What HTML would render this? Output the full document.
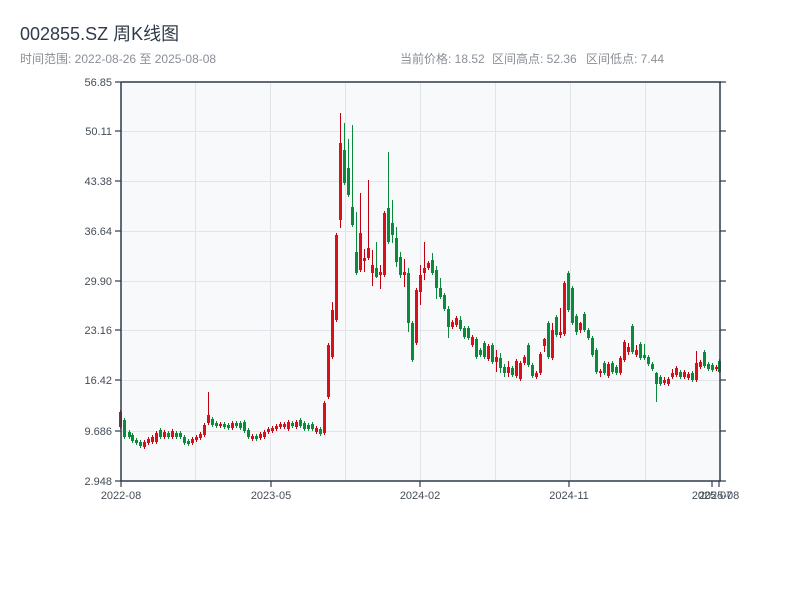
<!DOCTYPE html>
<html><head><meta charset="utf-8"><style>
body{margin:0;background:#fff;width:800px;height:600px;overflow:hidden;font-family:"Liberation Sans","Noto Sans CJK SC",sans-serif;}
</style></head><body>
<svg id="s" width="800" height="600" xmlns="http://www.w3.org/2000/svg" font-family="Liberation Sans, Noto Sans CJK SC, sans-serif">
<text x="20" y="40" font-size="18" fill="#2f3b4a">002855.SZ 周K线图</text>
<text x="20" y="63" font-size="12" fill="#8a8f96">时间范围: 2022-08-26 至 2025-08-08</text>
<text x="400" y="63" font-size="12" fill="#8a8f96">当前价格: 18.52</text>
<text x="492" y="63" font-size="12" fill="#8a8f96">区间高点: 52.36</text>
<text x="586" y="63" font-size="12" fill="#8a8f96">区间低点: 7.44</text>
<rect x="121" y="82" width="599" height="399" fill="#f7f9fb"/>
<g id="grid" stroke="#e1e4ea" stroke-width="1"></g>
<g id="c"></g>
<g stroke="#2d3a4b" stroke-width="1.5" fill="none">
<line x1="121" y1="82" x2="721" y2="82"/>
<line x1="121" y1="82" x2="121" y2="481"/>
<line x1="720" y1="82" x2="720" y2="481"/>
<line x1="121" y1="481" x2="721" y2="481"/>
</g>
<g id="ax" font-size="11" fill="#444c57"></g>
</svg>
<script>
var NS="http://www.w3.org/2000/svg";
function el(p,t,a,txt){var e=document.createElementNS(NS,t);for(var k in a)e.setAttribute(k,a[k]);if(txt)e.textContent=txt;document.getElementById(p).appendChild(e);}
var ys=[82,131,181,231,281,330,380,431,481],lb=["56.85","50.11","43.38","36.64","29.90","23.16","16.42","9.686","2.948"];
ys.forEach(function(y,i){if(i>0&&i<8)el("grid","line",{x1:121,x2:720,y1:y+.5,y2:y+.5});
el("ax","line",{x1:115,x2:121,y1:y,y2:y,stroke:"#2d3a4b","stroke-width":1.2});
el("ax","line",{x1:720,x2:726,y1:y,y2:y,stroke:"#2d3a4b","stroke-width":1.2});
el("ax","text",{x:112,y:y+4,"text-anchor":"end"},lb[i]);});
[195,270,345,420,495,570,645].forEach(function(x){el("grid","line",{x1:x+.5,x2:x+.5,y1:82,y2:481});});
[[121,"2022-08"],[271,"2023-05"],[420,"2024-02"],[569,"2024-11"],[712,"2025-07"],[719,"2025-08"]].forEach(function(a){
el("ax","line",{x1:a[0],x2:a[0],y1:481,y2:487,stroke:"#2d3a4b","stroke-width":1.2});
el("ax","text",{x:a[0],y:499,"text-anchor":"middle"},a[1]);});
var d=[
[120,412,427,"r"],[124,420,437,"g",418],[129,432,437,"g"],[132,435,441,"g"],[136,440,443,"g"],[140,442,446,"g"],[144,442,447,"r"],[148,439,443,"r"],[152,437,442,"r"],[156,433,442,"r"],[160,430,437,"g"],[164,432,437,"r"],[168,433,437,"g"],[172,431,437,"r"],[176,433,437,"g"],[180,433,437,"g"],[184,437,443,"g"],[188,441,444,"g"],[192,439,443,"r"],[196,437,440,"r"],[200,434,438,"r"],[204,425,435,"r"],[208,415,423,"r",392],[212,419,425,"g"],[216,423,426,"g"],[220,424,426,"r"],[224,424,427,"g"],[228,425,428,"g"],[232,423,428,"r"],[236,423,426,"g"],[240,423,428,"g"],[244,422,431,"g"],[248,430,437,"g"],[252,436,439,"r"],[256,436,439,"g"],[260,434,438,"r"],[264,432,437,"r"],[268,429,432,"r"],[272,428,431,"r"],[276,426,429,"r"],[280,424,427,"r"],[284,424,427,"r"],[288,422,429,"r"],[292,423,426,"g"],[296,422,427,"r"],[300,420,426,"g"],[304,423,429,"g"],[308,425,429,"g"],[312,424,429,"g"],[316,428,432,"r"],[320,429,434,"g"],[324,403,433,"r"],
[328,345,397,"r"],[332,310,357,"r",302],[336,235,320,"r"],[340,143,220,"r",113,228],[344,150,183,"g",123],[348,168,195,"g",139],[352,207,225,"g",125],[356,252,273,"g",212],[360,233,270,"r",193],[364,258,261,"r",249,272],[368,248,258,"r",180],[372,265,273,"r",250,286],[376,268,277,"g",242,278],[380,272,275,"r",265,289],[384,213,275,"r"],[388,208,242,"g",152],[392,223,235,"g",200,243],[396,238,262,"g",227,267],[400,257,275,"g",252,278],[404,272,275,"r",259,287],[408,273,323,"g",268,332],[412,323,360,"g"],[416,290,343,"r"],[420,275,292,"r",265,305],[424,268,273,"r",242,280],[428,263,268,"r"],[432,260,273,"g",253],[436,270,288,"g",266,299],[440,288,297,"g",278],[444,295,309,"g"],[448,309,327,"g",306,338],[452,322,327,"r"],[456,318,325,"r"],[460,320,329,"g",316],[464,328,337,"g"],[468,328,338,"g"],[472,337,345,"r"],[476,339,357,"g"],[480,350,355,"g"],[484,343,357,"g"],[488,346,359,"r"],[492,345,362,"g"],[496,357,362,"r",350,372],[500,358,368,"g",353,373],[504,367,373,"g",364,377],[508,367,373,"r",361,377],[512,368,375,"g"],[516,361,376,"r"],[520,363,379,"r"],[524,357,363,"r"],[528,345,365,"g"],[532,365,376,"g"],[536,373,377,"r"],[540,354,373,"r"],[544,339,346,"r",338,352],[548,323,357,"g"],[552,330,358,"r",323],[556,317,335,"g"],[560,332,335,"r",308,338],[564,283,334,"r"],[568,273,310,"g"],[572,288,323,"g"],[576,316,332,"g",314,335],[580,323,330,"r",322,333],[584,314,330,"g"],[588,330,338,"g"],[592,338,355,"g"],[596,350,372,"g"],[600,371,373,"r",369,377],[604,363,373,"g"],[608,364,376,"r"],[612,363,372,"g"],[616,367,373,"g"],[620,358,373,"r"],[624,342,360,"r"],[628,347,352,"r",343,355],[632,326,352,"g"],[636,350,355,"r",345,357],[640,344,358,"g"],[644,355,358,"g",344],[648,357,364,"g"],[652,364,369,"g"],[656,373,384,"g",372,402],[660,377,384,"g"],[664,380,383,"r",377],[668,379,384,"r",377,386],[672,373,377,"r",369],[676,368,375,"r"],[680,372,377,"g"],[684,372,377,"r"],[688,374,378,"r"],[692,373,380,"g"],[696,363,380,"r",351],[700,362,367,"r"],[704,352,366,"g"],[708,364,369,"g"],[712,365,370,"g"],[716,367,369,"r"],[719,361,372,"g",359,373]];
d.forEach(function(a){var x=a[0],t=a[1],b=a[2],c=a[3]=="r",wt=a[4]||t-2,wb=a[5]||b+2;
var col=c?"#d8101a":"#0b8a3c";
el("c","rect",{x:x,y:wt,width:1,height:wb-wt,fill:c?"#c00010":col});
el("c","rect",{x:x-1,y:t,width:3,height:Math.max(b-t,2),fill:col});});
</script>
</body></html>
